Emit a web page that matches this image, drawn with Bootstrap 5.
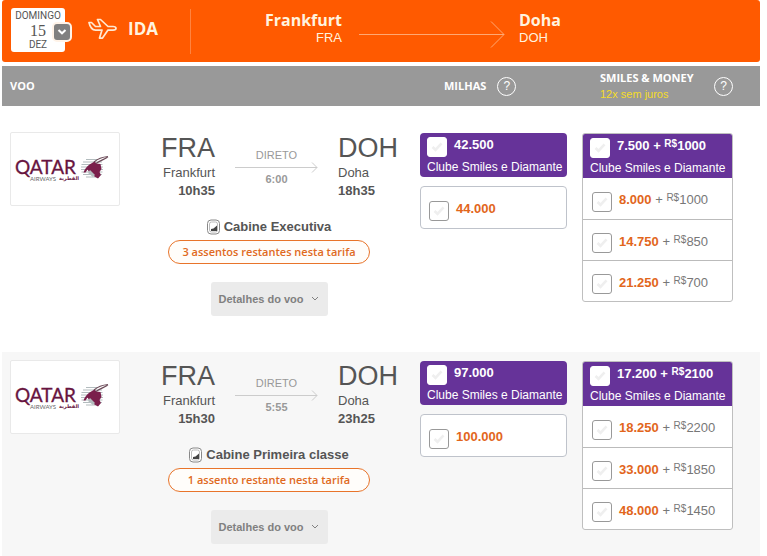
<!DOCTYPE html>
<html lang="pt-BR">
<head>
<meta charset="utf-8">
<meta name="viewport" content="width=device-width, initial-scale=1">
<title>Voos Frankfurt – Doha</title>
<link href="https://cdn.jsdelivr.net/npm/bootstrap@5.3.0/dist/css/bootstrap.min.css" rel="stylesheet">
<style>
  body { font-family: "Liberation Sans", Arial, sans-serif; font-size: 13px; line-height: 18px; color: #555; background: #fff; }
  .page { padding: 0 7px 0 2px; }
  .ui-font { font-family: "Open Sans", sans-serif; }

  /* Trip bar */
  .trip-bar { background: #ff5a00; color: #fff3df; min-height: 62px; border-radius: 3px; padding-left: 9px; }
  .date-box { width: 54px; height: 44px; margin-top: -2px; padding-top: 2px; background: #fff; border-radius: 3px; color: #555; font: 10px/12px Roboto, sans-serif; }
  .date-day { font: 16px/17px "Liberation Serif", serif; }
  .date-toggle { right: -7px; top: 14px; width: 20px; height: 20px; background: #808080; border: 2px solid #fff3e8; border-radius: 5px; }
  .plane { margin-left: 23px; }
  .leg-title { font-size: 17px; line-height: 24px; width: 62px; margin-left: 11px; }
  .trip-split { width: 1px; height: 45px; background: #ff8340; }
  .city-name { font-size: 16px; line-height: 18px; }
  .trip-from { width: 151px; }
  .trip-arrow { flex: 0 1 146px; min-width: 60px; margin: 9px 14px 0 17px; }

  /* Shared columns of the heading and the flights */
  .cols { display: grid; grid-template-columns: 110px minmax(0, 1fr) 147px 166px; padding: 0 27px 0 8px; }
  .cols > :nth-child(4) { margin-left: 15px; }
  .head-bar { background: #999; color: #fff; min-height: 40px; margin-top: 4px; font-size: 11px; line-height: 16px; }
  .smiles-head { padding-left: 18px; }
  .installments { font-family: "Liberation Sans", Arial, sans-serif; color: #f5dc28; }
  .help { width: 19px; height: 19px; border: 1px solid #fff; border-radius: 50%; background: none; color: #fff; font: 12px/16px "Liberation Sans", Arial, sans-serif; }
  .help-miles { margin-left: 11px; }

  /* Flights */
  .flight { padding-top: 8px; min-height: 228px; }
  .flight-first { margin-top: 18px; }
  .flight-alt { background: #f7f7f7; min-height: 204px; }
  .airline { height: 74px; background: #fff; border: 1px solid #e9e9e9; border-radius: 2px; }
  .route { display: grid; grid-template-columns: 1fr 83px 1fr; column-gap: 20px; padding-left: 13px; }
  .iata { font-size: 27px; line-height: 32px; }
  .via { color: #999; font-size: 11px; line-height: 14px; padding-top: 16px; }
  .via .fw-bold { margin-top: -2px; }
  .extras { padding: 18px 2px 0 0; }
  .seats { width: 202px; height: 24px; border: 1px solid #e8742a; border-radius: 12px; background: #fffdfa; color: #e06a1e; font-size: 11px; line-height: 22px; font-weight: 600; margin-top: 4px; }
  .details { width: 117px; height: 34px; border: 0; border-radius: 3px; background: #ebebeb; color: #808080; font-size: 11px; font-weight: bold; margin-top: 18px; }

  /* Fares */
  .fares { padding-top: 1px; }
  .fare-club { background: #663399; color: #fff; height: 44px; padding: 3px 6px 0 7px; }
  .fare-club .fare-line { height: 21px; gap: 7px; line-height: 17px; }
  .fare-note { font-size: 12px; line-height: 20px; white-space: nowrap; display: block; }
  .fare-row { height: 41px; padding: 3px 0 0 9px; gap: 7px; }
  .fare-row + .fare-row { border-top: 1px solid #bbb; }
  .fare-single { height: 43px; border: 1px solid #bfc3cb; border-radius: 4px; background: #fff; margin-top: 9px; padding-left: 8px; }
  .fare-group { border: 1px solid #bfbfbf; border-radius: 3px; background: #fff; overflow: hidden; }
  .pts { color: #e2661c; font-weight: bold; }
  .cur { font-size: 10px; vertical-align: 3px; line-height: 1; }
  .fare-row .val { color: #777; }
  .tick { appearance: none; flex: none; width: 20px; height: 20px; margin: 3px 0 0; border: 1px solid #999; border-radius: 3px;
    background: #fff url("data:image/svg+xml,%3Csvg xmlns='http://www.w3.org/2000/svg' viewBox='0 0 18 18'%3E%3Cpath d='M4.5 9l3 2.800 6-6.500' fill='none' stroke='%23efefef' stroke-width='2.6'/%3E%3C/svg%3E") center/18px no-repeat; }
  .fare-club .tick { border-color: #fff; margin-top: 1px; }
  svg { display: block; }
</style>
</head>
<body>
<svg width="0" height="0" class="position-absolute" aria-hidden="true">
  <symbol id="airline-logo" viewBox="0 0 108 72">
    <path d="M75 26.500h12M72 29h19M70.500 31.500h21M70 34h22M70 36.500h22M70.500 39h21M72 41.500h19M75 44h13" stroke="#b3bcbe" stroke-width="1.200"/>
    <path d="M72.500 39.500c1-3 3-6 6-8l5-3 2 2 4 .5 1 5-2 3 1.500 3-3 3.500-3.500-2-5-4-2-3-2 3z" fill="#7a1f4b"/>
    <path d="M77 40l2-3 5 5-2 2z" fill="#b3bcbe"/>
    <path d="M83 29c4-3.500 8-5 14-5.500M85 30.500c3-2.500 8-4 12-6.500" fill="none" stroke="#6b4a58" stroke-width="1.200"/>
    <text x="4" y="41" font-family="Lato, sans-serif" font-size="19" fill="#681440" stroke="#681440" stroke-width=".3">QATAR</text>
    <text x="19" y="48" font-family="Lato, sans-serif" font-size="6" fill="#666">AIRWAYS</text>
    <text x="68" y="47" text-anchor="end" direction="ltr" font-family="DejaVu Sans, sans-serif" font-size="5" font-weight="bold" fill="#681440">القطرية</text>
  </symbol>
  <symbol id="seat-window" viewBox="0 0 13 16">
    <rect x=".5" y="1" width="12" height="14" rx="3.500" fill="#fff" stroke="#888"/>
    <rect x="2.500" y="3" width="8" height="10" rx="2" fill="none" stroke="#aaa" stroke-width=".8"/>
    <path d="M4 12v-2l2.500-.5L10 6.500V12z" fill="#444"/>
  </symbol>
  <symbol id="leg-arrow" viewBox="0 0 83 12">
    <path d="M0 5.500h82M77 .5l5 5-5 5" fill="none" stroke="#ccc"/>
  </symbol>
  <symbol id="chev" viewBox="0 0 8 6">
    <path d="M1 1l3 3 3-3" fill="none" stroke="currentColor"/>
  </symbol>
</svg>

<main class="page">
  <header class="trip-bar d-flex align-items-center">
    <div class="date-box position-relative text-center flex-shrink-0">
      <div>DOMINGO</div>
      <div class="date-day">15</div>
      <div>DEZ</div>
      <button type="button" class="date-toggle position-absolute p-0 d-flex align-items-center justify-content-center" aria-label="Alterar data">
        <svg width="10" height="8" viewBox="0 0 10 8"><path d="M1.500 2L5 5.300 8.500 2" fill="none" stroke="#fff" stroke-width="2"/></svg>
      </button>
    </div>
    <div class="d-flex align-items-center flex-shrink-0 pb-1">
      <svg class="plane" width="29" height="22" viewBox="0 0 29 22" aria-hidden="true">
        <path d="M1 4.500h2.500l4 4h5L9.500 1.500h3l7.500 7h5c2 0 3 .8 3 1.800s-1 1.800-3 1.800h-5l-5.500 8h-3l2.500-8H7.500C4.500 12 2 9 1 4.500z" fill="none" stroke="#ffe9d2" stroke-width="1.700" stroke-linejoin="round"/>
      </svg>
      <h1 class="leg-title ui-font fw-bold mb-0">IDA</h1>
    </div>
    <div class="trip-split"></div>
    <div class="d-flex align-items-center flex-grow-1 pb-1">
      <div class="trip-from text-end">
        <div class="city-name ui-font fw-bold">Frankfurt</div>
        <div>FRA</div>
      </div>
      <div class="trip-arrow">
        <svg width="100%" height="28" viewBox="0 0 146 28" aria-hidden="true"><path d="M0 14.500h145M132 1.500l13 13-13 13" fill="none" stroke="#ffa873"/></svg>
      </div>
      <div>
        <div class="city-name ui-font fw-bold">Doha</div>
        <div>DOH</div>
      </div>
    </div>
  </header>

  <div class="head-bar ui-font fw-bold cols align-items-center">
    <div>VOO</div>
    <div></div>
    <div class="d-flex align-items-center ps-4">MILHAS
      <button type="button" class="help help-miles p-0" aria-label="Ajuda sobre milhas">?</button>
    </div>
    <div class="smiles-head d-flex align-items-center justify-content-between">
      <div>SMILES &amp; MONEY<div class="installments fw-normal">12x sem juros</div></div>
      <button type="button" class="help p-0" aria-label="Ajuda sobre Smiles &amp; Money">?</button>
    </div>
  </div>

  <section class="flight flight-first cols">
    <div><div class="airline"><svg width="108" height="72" role="img" aria-label="Qatar Airways"><use href="#airline-logo"/></svg></div></div>
    <div>
      <div class="route">
        <div class="text-end"><div class="iata">FRA</div><div>Frankfurt</div><div class="fw-bold">10h35</div></div>
        <div class="via text-center">DIRETO<svg width="83" height="12"><use href="#leg-arrow"/></svg><div class="fw-bold">6:00</div></div>
        <div><div class="iata">DOH</div><div>Doha</div><div class="fw-bold">18h35</div></div>
      </div>
      <div class="extras d-flex flex-column align-items-center">
        <div class="d-flex align-items-center fw-bold"><svg class="me-1" width="13" height="16"><use href="#seat-window"/></svg>Cabine Executiva</div>
        <div class="seats ui-font text-center">3 assentos restantes nesta tarifa</div>
        <button type="button" class="details d-flex align-items-center justify-content-center gap-2 p-0">Detalhes do voo <svg width="8" height="6"><use href="#chev"/></svg></button>
      </div>
    </div>
    <div class="fares">
      <label class="fare-club rounded-1 d-block"><span class="fare-line d-flex"><input class="tick" type="checkbox"><b>42.500</b></span><span class="fare-note">Clube Smiles e Diamante</span></label>
      <label class="fare-row fare-single d-flex align-items-center"><input class="tick" type="checkbox"><span class="pts">44.000</span></label>
    </div>
    <div class="fares">
      <div class="fare-group">
        <label class="fare-club d-block"><span class="fare-line d-flex"><input class="tick" type="checkbox"><b>7.500 + <span class="cur">R$</span>1000</b></span><span class="fare-note">Clube Smiles e Diamante</span></label>
        <label class="fare-row d-flex align-items-center"><input class="tick" type="checkbox"><span class="val"><span class="pts">8.000</span> + <span class="cur">R$</span>1000</span></label>
        <label class="fare-row d-flex align-items-center"><input class="tick" type="checkbox"><span class="val"><span class="pts">14.750</span> + <span class="cur">R$</span>850</span></label>
        <label class="fare-row d-flex align-items-center"><input class="tick" type="checkbox"><span class="val"><span class="pts">21.250</span> + <span class="cur">R$</span>700</span></label>
      </div>
    </div>
  </section>

  <section class="flight flight-alt cols">
    <div><div class="airline"><svg width="108" height="72" role="img" aria-label="Qatar Airways"><use href="#airline-logo"/></svg></div></div>
    <div>
      <div class="route">
        <div class="text-end"><div class="iata">FRA</div><div>Frankfurt</div><div class="fw-bold">15h30</div></div>
        <div class="via text-center">DIRETO<svg width="83" height="12"><use href="#leg-arrow"/></svg><div class="fw-bold">5:55</div></div>
        <div><div class="iata">DOH</div><div>Doha</div><div class="fw-bold">23h25</div></div>
      </div>
      <div class="extras d-flex flex-column align-items-center">
        <div class="d-flex align-items-center fw-bold"><svg class="me-1" width="13" height="16"><use href="#seat-window"/></svg>Cabine Primeira classe</div>
        <div class="seats ui-font text-center">1 assento restante nesta tarifa</div>
        <button type="button" class="details d-flex align-items-center justify-content-center gap-2 p-0">Detalhes do voo <svg width="8" height="6"><use href="#chev"/></svg></button>
      </div>
    </div>
    <div class="fares">
      <label class="fare-club rounded-1 d-block"><span class="fare-line d-flex"><input class="tick" type="checkbox"><b>97.000</b></span><span class="fare-note">Clube Smiles e Diamante</span></label>
      <label class="fare-row fare-single d-flex align-items-center"><input class="tick" type="checkbox"><span class="pts">100.000</span></label>
    </div>
    <div class="fares">
      <div class="fare-group">
        <label class="fare-club d-block"><span class="fare-line d-flex"><input class="tick" type="checkbox"><b>17.200 + <span class="cur">R$</span>2100</b></span><span class="fare-note">Clube Smiles e Diamante</span></label>
        <label class="fare-row d-flex align-items-center"><input class="tick" type="checkbox"><span class="val"><span class="pts">18.250</span> + <span class="cur">R$</span>2200</span></label>
        <label class="fare-row d-flex align-items-center"><input class="tick" type="checkbox"><span class="val"><span class="pts">33.000</span> + <span class="cur">R$</span>1850</span></label>
        <label class="fare-row d-flex align-items-center"><input class="tick" type="checkbox"><span class="val"><span class="pts">48.000</span> + <span class="cur">R$</span>1450</span></label>
      </div>
    </div>
  </section>
</main>
<script src="https://cdn.jsdelivr.net/npm/bootstrap@5.3.0/dist/js/bootstrap.bundle.min.js"></script>
</body>
</html>
